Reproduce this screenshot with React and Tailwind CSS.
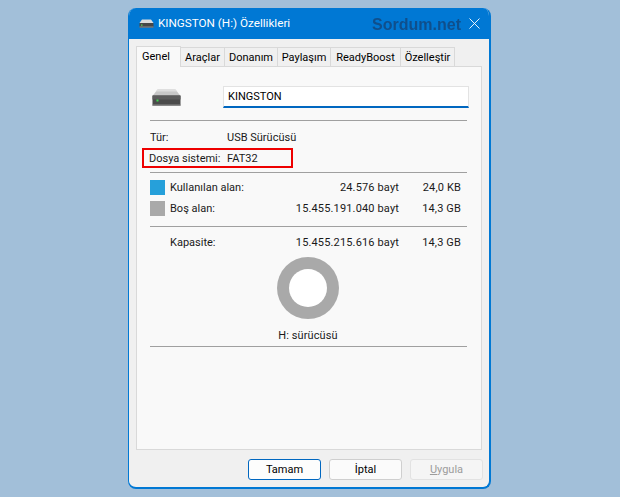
function Drive({ small }) {
  return small ? (
    <svg width="15" height="9" viewBox="0 0 15 9" className="shrink-0">
      <path d="M3 0.5H12L14.5 4H0.5Z" fill="#dcdcdc" />
      <rect x="0.5" y="4" width="14" height="4.5" rx="0.5" fill="#474747" />
      <rect x="0.5" y="7.5" width="14" height="1" fill="#8d8d8d" />
      <rect x="2" y="5.5" width="1.5" height="1.2" fill="#58d858" />
    </svg>
  ) : (
    <svg width="29" height="17" viewBox="0 0 29 17" className="shrink-0">
      <path d="M5.5 0.5H23.5L28.5 7H0.5Z" fill="#c8c8c8" />
      <path d="M5.5 0.5H23.5L25 2.5H4Z" fill="#dedede" />
      <rect x="0.5" y="6.5" width="28" height="10" rx="0.5" fill="#4b4b4b" />
      <rect x="0.5" y="6.5" width="28" height="4" fill="#5c5c5c" />
      <rect x="0.5" y="15.5" width="28" height="1.5" fill="#8a8a8a" />
      <rect x="4.5" y="10.5" width="2" height="2" fill="#3fdc4f" />
    </svg>
  );
}

function Tab({ children, active, w }) {
  return active ? (
    <div className={`${w} h-[21px] -mb-px z-10 bg-[#f9f9f9] border border-b-0 border-[#d9d9d9] flex items-center pl-[5px] pb-[1px] text-black`}>
      {children}
    </div>
  ) : (
    <div className={`${w} h-[19px] bg-[#f0f0f0] border border-b-0 border-l-0 border-[#d9d9d9] flex items-center justify-center pt-[1px] text-black`}>
      {children}
    </div>
  );
}

function Sep() {
  return <div className="h-px bg-[#a0a0a0]" />;
}

function UsageRow({ color, label, bytes, size }) {
  return (
    <div className="flex items-center h-[21px]">
      <div className={`w-[15px] h-[15px] shrink-0 ${color}`} />
      <span className="ml-[5px] pb-[1px]">{label}</span>
      <span className="ml-auto pb-[1px] tracking-[0.15px]">{bytes}</span>
      <span className="w-[68px] pr-[6px] pb-[1px] text-right tracking-[0.15px]">{size}</span>
    </div>
  );
}

export default function App() {
  return (
    <div className="w-[620px] h-[497px] bg-[#a2bfd9] pt-2 pl-[128px] overflow-hidden text-[11px] leading-none font-['Roboto','Open_Sans',sans-serif] text-[#1a1a1a]">
      <div className="w-[363px] h-[481px] rounded-lg border border-[#0078d4] border-t-0 bg-[#f0f0f0] flex flex-col overflow-hidden border-b-2 border-r-2">
        <div className="h-[31px] bg-[#0078d4] flex items-center pl-[10px] text-white text-[11.7px] shrink-0">
          <Drive small />
          <span className="ml-[4px]">KINGSTON (H:) Özellikleri</span>
          <span className="ml-auto text-[16px] font-bold font-['Liberation_Sans',sans-serif] text-[#0f4f8c] blur-[0.5px] translate-y-[1px]">Sordum.net</span>
          <svg width="11" height="11" viewBox="0 0 11 11" className="ml-[8px] mr-[9px]">
            <path d="M0.5 0.5L10.5 10.5M10.5 0.5L0.5 10.5" stroke="#ffffff" strokeWidth="0.9" fill="none" />
          </svg>
        </div>

        <div className="ml-[7px] mt-[7px] flex items-end h-[20px]">
          <Tab active w="w-[45px]">Genel</Tab>
          <Tab w="w-[44px]">Araçlar</Tab>
          <Tab w="w-[53px]">Donanım</Tab>
          <Tab w="w-[53px]">Paylaşım</Tab>
          <Tab w="w-[70px]">ReadyBoost</Tab>
          <Tab w="w-[54px]">Özelleştir</Tab>
        </div>

        <div className="ml-[7px] w-[346px] h-[384px] bg-[#f9f9f9] border border-[#d9d9d9] pl-[13px] pr-[14px] shrink-0">
          <div className="flex items-center h-[22px] mt-[19px]">
            <div className="ml-[2px]"><Drive /></div>
            <div className="ml-[42px] w-[246px] h-[22px] bg-white border border-[#e3e3e3] border-b-2 border-b-[#0067c0] flex items-center pl-[4px] -mr-[2px] text-black">
              KINGSTON
            </div>
          </div>

          <div className="mt-[12px]"><Sep /></div>

          <div className="flex items-center h-[21px] mt-[6px] pb-[1px]">
            <span className="w-[77px]">Tür:</span>
            <span>USB Sürücüsü</span>
          </div>
          <div className="relative flex items-center h-[21px] pb-[1px]">
            <span className="w-[77px] -ml-[1px]">Dosya sistemi:</span>
            <span className="ml-[1px]">FAT32</span>
            <div className="absolute left-[-8px] top-0 w-[151px] h-[20px] border-2 border-[#ee0000]" />
          </div>

          <div className="mt-[3px]"><Sep /></div>

          <div className="mt-[4px]">
            <UsageRow color="bg-[#26a0da]" label="Kullanılan alan:" bytes="24.576 bayt" size="24,0 KB" />
            <UsageRow color="bg-[#a9a9a9]" label="Boş alan:" bytes="15.455.191.040 bayt" size="14,3 GB" />
          </div>

          <div className="mt-[7px]"><Sep /></div>

          <div className="flex items-center h-[21px] mt-[5px] pb-[1px] pl-[20px]">
            <span>Kapasite:</span>
            <span className="ml-auto tracking-[0.15px]">15.455.215.616 bayt</span>
            <span className="w-[68px] pr-[6px] text-right tracking-[0.15px]">14,3 GB</span>
          </div>

          <div className="flex flex-col items-center pr-[2px]">
            <div className="mt-[4px] w-[62px] h-[62px] rounded-full bg-[#a9a9a9] flex items-center justify-center">
              <div className="w-[38px] h-[38px] rounded-full bg-white" />
            </div>
            <div className="mt-[9px] h-[14px] flex items-center tracking-[0.1px] ml-[1px]">H: sürücüsü</div>
          </div>

          <div className="mt-[4px]"><Sep /></div>
        </div>

        <div className="flex mt-[9px] ml-[119px] gap-[8px]">
          <button className="w-[73px] h-[21px] rounded-[3px] border border-[#0067c0] bg-[#fdfdfd] text-black flex items-center justify-center">Tamam</button>
          <button className="w-[73px] h-[21px] rounded-[3px] border border-[#cfcfcf] bg-[#fbfbfb] text-black flex items-center justify-center">İptal</button>
          <button className="w-[73px] h-[21px] rounded-[3px] border border-[#e2e2e2] bg-[#f5f5f5] text-[#9c9c9c] flex items-center justify-center"><span><u>U</u>ygula</span></button>
        </div>
      </div>
    </div>
  );
}
